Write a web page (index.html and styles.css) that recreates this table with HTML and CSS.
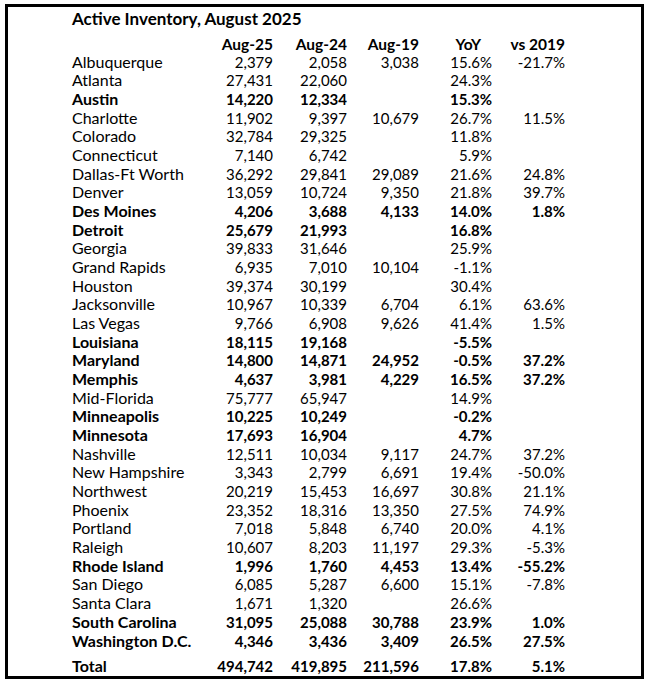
FILE: index.html
```html
<!DOCTYPE html>
<html>
<head>
<meta charset="utf-8">
<link rel="stylesheet" href="styles.css">
</head>
<body>
<div class="sheet">
  <div class="title">Active Inventory, August 2025</div>
  <div class="row head"><span></span><span>Aug-25</span><span>Aug-24</span><span>Aug-19</span><span class="yoy">YoY</span><span>vs 2019</span></div>
  <div class="body">
    <div class="row"><span>Albuquerque</span><span>2,379</span><span>2,058</span><span>3,038</span><span>15.6%</span><span>-21.7%</span></div>
    <div class="row"><span>Atlanta</span><span>27,431</span><span>22,060</span><span></span><span>24.3%</span><span></span></div>
    <div class="row b"><span>Austin</span><span>14,220</span><span>12,334</span><span></span><span>15.3%</span><span></span></div>
    <div class="row"><span>Charlotte</span><span>11,902</span><span>9,397</span><span>10,679</span><span>26.7%</span><span>11.5%</span></div>
    <div class="row"><span>Colorado</span><span>32,784</span><span>29,325</span><span></span><span>11.8%</span><span></span></div>
    <div class="row"><span>Connecticut</span><span>7,140</span><span>6,742</span><span></span><span>5.9%</span><span></span></div>
    <div class="row"><span>Dallas-Ft Worth</span><span>36,292</span><span>29,841</span><span>29,089</span><span>21.6%</span><span>24.8%</span></div>
    <div class="row"><span>Denver</span><span>13,059</span><span>10,724</span><span>9,350</span><span>21.8%</span><span>39.7%</span></div>
    <div class="row b"><span>Des Moines</span><span>4,206</span><span>3,688</span><span>4,133</span><span>14.0%</span><span>1.8%</span></div>
    <div class="row b"><span>Detroit</span><span>25,679</span><span>21,993</span><span></span><span>16.8%</span><span></span></div>
    <div class="row"><span>Georgia</span><span>39,833</span><span>31,646</span><span></span><span>25.9%</span><span></span></div>
    <div class="row"><span>Grand Rapids</span><span>6,935</span><span>7,010</span><span>10,104</span><span>-1.1%</span><span></span></div>
    <div class="row"><span>Houston</span><span>39,374</span><span>30,199</span><span></span><span>30.4%</span><span></span></div>
    <div class="row"><span>Jacksonville</span><span>10,967</span><span>10,339</span><span>6,704</span><span>6.1%</span><span>63.6%</span></div>
    <div class="row"><span>Las Vegas</span><span>9,766</span><span>6,908</span><span>9,626</span><span>41.4%</span><span>1.5%</span></div>
    <div class="row b"><span>Louisiana</span><span>18,115</span><span>19,168</span><span></span><span>-5.5%</span><span></span></div>
    <div class="row b"><span>Maryland</span><span>14,800</span><span>14,871</span><span>24,952</span><span>-0.5%</span><span>37.2%</span></div>
    <div class="row b"><span>Memphis</span><span>4,637</span><span>3,981</span><span>4,229</span><span>16.5%</span><span>37.2%</span></div>
    <div class="row"><span>Mid-Florida</span><span>75,777</span><span>65,947</span><span></span><span>14.9%</span><span></span></div>
    <div class="row b"><span>Minneapolis</span><span>10,225</span><span>10,249</span><span></span><span>-0.2%</span><span></span></div>
    <div class="row b"><span>Minnesota</span><span>17,693</span><span>16,904</span><span></span><span>4.7%</span><span></span></div>
    <div class="row"><span>Nashville</span><span>12,511</span><span>10,034</span><span>9,117</span><span>24.7%</span><span>37.2%</span></div>
    <div class="row"><span>New Hampshire</span><span>3,343</span><span>2,799</span><span>6,691</span><span>19.4%</span><span>-50.0%</span></div>
    <div class="row"><span>Northwest</span><span>20,219</span><span>15,453</span><span>16,697</span><span>30.8%</span><span>21.1%</span></div>
    <div class="row"><span>Phoenix</span><span>23,352</span><span>18,316</span><span>13,350</span><span>27.5%</span><span>74.9%</span></div>
    <div class="row"><span>Portland</span><span>7,018</span><span>5,848</span><span>6,740</span><span>20.0%</span><span>4.1%</span></div>
    <div class="row"><span>Raleigh</span><span>10,607</span><span>8,203</span><span>11,197</span><span>29.3%</span><span>-5.3%</span></div>
    <div class="row b"><span>Rhode Island</span><span>1,996</span><span>1,760</span><span>4,453</span><span>13.4%</span><span>-55.2%</span></div>
    <div class="row"><span>San Diego</span><span>6,085</span><span>5,287</span><span>6,600</span><span>15.1%</span><span>-7.8%</span></div>
    <div class="row"><span>Santa Clara</span><span>1,671</span><span>1,320</span><span></span><span>26.6%</span><span></span></div>
    <div class="row b"><span>South Carolina</span><span>31,095</span><span>25,088</span><span>30,788</span><span>23.9%</span><span>1.0%</span></div>
    <div class="row b"><span>Washington D.C.</span><span>4,346</span><span>3,436</span><span>3,409</span><span>26.5%</span><span>27.5%</span></div>
  </div>
  <div class="row b total"><span>Total</span><span>494,742</span><span>419,895</span><span>211,596</span><span>17.8%</span><span>5.1%</span></div>
</div>
</body>
</html>
```
FILE: styles.css
```css
html, body {
  margin: 0;
  padding: 0;
  background: #ffffff;
}
body {
  padding: 4px 0 0 5px;
}
.sheet {
  width: 569px;
  height: 669px;
  border: 3px solid #000;
  padding: 0 0 0 64px;
  box-sizing: content-box;
  font-family: Lato, "Open Sans", sans-serif;
  color: #000;
  font-size: 15px;
}
.title {
  font-weight: 700;
  font-size: 17px;
  height: 24px;
  line-height: 24px;
}
.row {
  display: grid;
  grid-template-columns: 128px 73px 74px 72px 73px 73px;
  height: 18.68px;
  line-height: 18.68px;
  white-space: nowrap;
}
.row span {
  text-align: right;
}
.row span:first-child {
  text-align: left;
  font-size: 16px;
}
.head {
  font-weight: 700;
  font-size: 15.5px;
  margin-top: 4px;
  margin-bottom: -1px;
}
.head .yoy {
  padding-right: 11px;
}
.b {
  font-weight: 700;
}
.total {
  margin-top: 7px;
}
```
